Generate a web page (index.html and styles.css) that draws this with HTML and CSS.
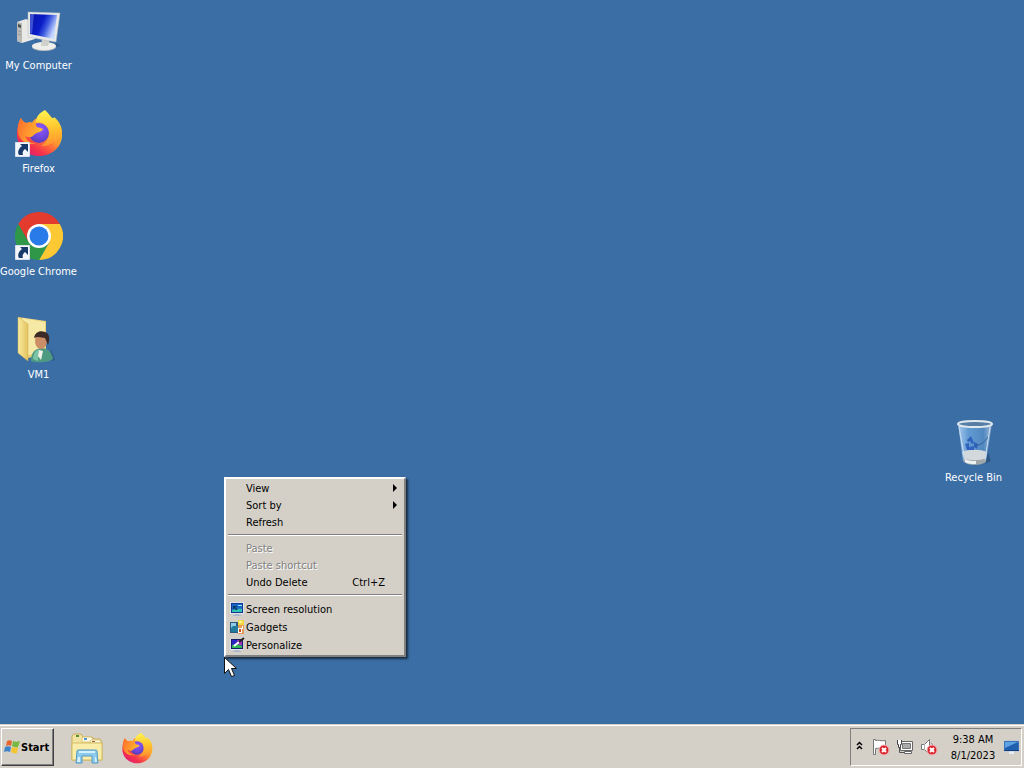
FILE: index.html
```html
<!DOCTYPE html>
<html lang="en">

<head>
  <meta charset="UTF-8" />
  <meta name="viewport" content="width=device-width, initial-scale=1.0" />
  <title>Desktop</title>
  <link rel="stylesheet" href="styles.css">
</head>

<body>
  <!-- Shared icons -->
  <svg class="defs" width="0" height="0" aria-hidden="true">
    <defs>
      <linearGradient id="fx-body" x1="0.85" y1="0.1" x2="0.2" y2="0.9">
        <stop offset="0" stop-color="#fff44f" />
        <stop offset="0.3" stop-color="#ffb92e" />
        <stop offset="0.55" stop-color="#ff7139" />
        <stop offset="0.8" stop-color="#f5334b" />
        <stop offset="1" stop-color="#e3216b" />
      </linearGradient>
      <linearGradient id="fx-flame" x1="0.4" y1="0" x2="0.5" y2="1">
        <stop offset="0" stop-color="#fff44f" />
        <stop offset="0.5" stop-color="#ffc52e" />
        <stop offset="1" stop-color="#ff8a30" />
      </linearGradient>
      <radialGradient id="fx-globe" cx="0.55" cy="0.3" r="0.8">
        <stop offset="0" stop-color="#9059ff" />
        <stop offset="0.6" stop-color="#6b45d6" />
        <stop offset="1" stop-color="#4b3aa8" />
      </radialGradient>
      <linearGradient id="fx-head" x1="0" y1="0" x2="1" y2="0.4">
        <stop offset="0" stop-color="#ff6a2c" />
        <stop offset="1" stop-color="#ffbd2f" />
      </linearGradient>
    </defs>
    <symbol id="firefox" viewBox="0 0 48 48">
      <path fill="url(#fx-body)" d="M6 9c1 3 3 4 5 5 3-1 5-1 8 0 3-7 8-8 19-5 6 5 9 10 9 17 0 12-10 21-23 21C11 47 2 37 2 26c0-7 1-11 4-17z" />
      <path fill="url(#fx-flame)" d="M30 1c-6 3-9 7-9 12 6-1 12 3 13 9 1 7-3 12-8 15 8 0 14-3 15-11 1 5 0 9-2 13 5-4 8-9 8-15 0-7-3-12-8-16l-1 3c-2-4-5-7-8-10z" />
      <circle cx="24" cy="24" r="10" fill="url(#fx-globe)" />
      <path fill="url(#fx-head)" d="M6 9c1 3 3 4 5 5 2 0 4-1 6 0 1-2 2-4 5-5-2 3-2 6 0 9 2 1 5 1 6 2-1 3-5 3-8 5-2 1-2 3-5 3-2 0-4 0-5-1 2 5 6 8 11 7-8 3-17-2-18-11 0-5 0-10 3-14z" />
    </symbol>
    <symbol id="shortcut" viewBox="0 0 15 15">
      <path fill="#f4f6fb" stroke="#d5deec" d="M.5.5h14v14H.5z" />
      <path fill="#173a6b" d="M5 2h8v8l-3-3C8 9 7 10 8 13H4C2 10 4 6 7 4z" />
    </symbol>
  </svg>

  <main class="desktop">
    <div class="icons">
      <a class="icon" href="#">
        <svg viewBox="0 0 48 48" aria-hidden="true">
          <defs>
            <linearGradient id="screen" x1="0" y1="0" x2="1" y2="0.4">
              <stop offset="0" stop-color="#0716a8" />
              <stop offset="0.5" stop-color="#0a1cc8" />
              <stop offset="0.7" stop-color="#3c58de" />
              <stop offset="1" stop-color="#c5d8ff" />
            </linearGradient>
          </defs>
          <path fill="#234a78" opacity="0.5" d="M22 44l24-4-4-3z" />
          <path fill="#e9e9e6" d="M2 16l9-3 9 4v16L7 37l-5-2z" />
          <path fill="#b9bab8" d="M7 17v20l-5-2V16z" />
          <path fill="#4c5355" d="M3 18l3 1v3l-3-1z" />
          <path stroke="#999" d="M3 25l3 1M3 28l3 1" />
          <ellipse cx="29" cy="41" rx="12" ry="4" fill="#bfc3c5" />
          <ellipse cx="29" cy="40" rx="12" ry="4" fill="#eeeeeb" />
          <path fill="#d1d1cc" d="M27 33h8l-2 7h-7z" />
          <path fill="#e7e9e9" stroke="#b7bdc2" stroke-width="0.500" d="M13 6l32 1-4 29-28-5z" />
          <path fill="url(#screen)" d="M15 8l27 1-3 24-24-5z" />
          <path fill="#8ea4ff" opacity="0.4" d="M15 8h4l-2 20-2-1z" />
        </svg>
        <span>My Computer</span>
      </a>
      <a class="icon" href="#">
        <svg viewBox="0 0 48 48" aria-hidden="true">
          <use href="#firefox" width="48" height="48" />
          <use href="#shortcut" x="0" y="33" width="15" height="15" />
        </svg>
        <span>Firefox</span>
      </a>
      <a class="icon" href="#">
        <svg viewBox="0 0 48 48" aria-hidden="true">
          <path fill="#e33b2e" d="M3.200 12a24 24 0 0 1 41.600 0H24L13.600 30z" />
          <path fill="#fcc934" d="M44.800 12A24 24 0 0 1 24 48l10.400-18L34.400 18 24 12z" />
          <path fill="#2e9848" d="M24 48A24 24 0 0 1 3.200 12l10.400 18L24 36l10.400-6z" />
          <circle cx="24" cy="24" r="12" fill="#fff" />
          <circle cx="24" cy="24" r="9.500" fill="#2a7bea" />
          <use href="#shortcut" x="0" y="33" width="15" height="15" />
        </svg>
        <span>Google Chrome</span>
      </a>
      <a class="icon" href="#">
        <svg viewBox="0 0 48 48" aria-hidden="true">
          <defs>
            <linearGradient id="folder" x1="0" y1="0" x2="1" y2="0">
              <stop offset="0" stop-color="#f9eaa0" />
              <stop offset="1" stop-color="#e3c35f" />
            </linearGradient>
          </defs>
          <path fill="#e9cf78" d="M3 2l28 4v33l-18 4z" />
          <path fill="#f6e8a5" d="M7 3l23 4v29l-17 4z" />
          <path fill="url(#folder)" stroke="#d2b24e" stroke-width="0.500" d="M3 2l10 7v37L3 38z" />
          <path fill="#244a70" opacity="0.5" d="M36 46l4-1-4-11z" />
          <path fill="#4f9b82" d="M16 46c0-8 4-13 11-13 6 0 10 5 11 11-5 4-17 4-22 2z" />
          <path fill="#7dc4a6" d="M18 44c0-5 3-9 6-10l-1 12z" />
          <path fill="#f2f2e8" d="M24 35l4 1-2 9-3-4z" />
          <ellipse cx="26" cy="26" rx="6" ry="8" fill="#cb8e66" />
          <path fill="#3b2a25" d="M19 23c1-6 6-8 11-6 5 1 5 8 3 13l-3-7c-3 0-7-2-11 0z" />
        </svg>
        <span>VM1</span>
      </a>
    </div>

    <a class="icon recycle" href="#">
      <svg viewBox="0 0 48 48" aria-hidden="true">
        <defs>
          <linearGradient id="glass" x1="0" y1="0" x2="1" y2="0">
            <stop offset="0" stop-color="#a8caec" />
            <stop offset="0.3" stop-color="#629bd3" />
            <stop offset="0.75" stop-color="#5288c0" />
            <stop offset="1" stop-color="#a2bcd8" />
          </linearGradient>
        </defs>
        <path fill="#203f66" opacity="0.5" d="M35 46l6-3-3-9z" />
        <path fill="url(#glass)" d="M8 5h34l-6 38c-5 5-18 5-23 0z" />
        <path fill="#d2d8dc" d="M12 34c6-3 19-3 25 0l-1 7c-6 3-17 3-22 0z" />
        <path fill="#a0a5a8" d="M13 40c6 3 17 3 23 0v4c-6 4-17 4-22 0z" />
        <path fill="#eef1f2" d="M15 41c4 2 7 2 11 2v3c-5 0-8 0-11-2z" />
        <path fill="#2f63bd" d="M17 22l4-4 3 7-2 1-2-3-2 1zM15 26l4-1v4l5-1v4h-7zM24 24l4 2-1 5-3-2z" />
        <path fill="none" stroke="#315f9c" d="M24 27c7 1 10-3 14-8" />
        <ellipse cx="25" cy="6" rx="17" ry="3" fill="#557da5" stroke="#dfe8ed" stroke-width="2" />
        <path fill="none" stroke="#c4dcf1" d="M9 9l6 33M40 9l-5 33" />
      </svg>
      <span>Recycle Bin</span>
    </a>

    <div class="menu" role="menu">
      <button class="item" role="menuitem">View <i class="arrow"></i></button>
      <button class="item" role="menuitem">Sort by <i class="arrow"></i></button>
      <button class="item" role="menuitem">Refresh</button>
      <hr />
      <button class="item" role="menuitem" disabled>Paste</button>
      <button class="item" role="menuitem" disabled>Paste shortcut</button>
      <button class="item" role="menuitem">Undo Delete <span class="keys">Ctrl+Z</span></button>
      <hr />
      <button class="item with-icon" role="menuitem">
        <svg viewBox="0 0 16 16" aria-hidden="true">
          <path fill="#a9b8cc" d="M6 13h4v1h2v1H4v-1h2z" />
          <path fill="#dde3ec" d="M1 1h14v12H1z" />
          <path fill="#16368f" d="M2 2h12v10H2z" />
          <path fill="#1668c8" d="M3 3h10v8H3z" />
          <path fill="#2ec6b1" d="M3 9c3 0 6-2 10-1v3H3z" />
          <path fill="#073c5d" d="M4 5h4v1H6l3 3H7L5 7v1H4z" />
          <path fill="#9fe0f0" d="M9 4h4v1H9z" />
        </svg>
        Screen resolution
      </button>
      <button class="item with-icon" role="menuitem">
        <svg viewBox="0 0 16 16" aria-hidden="true">
          <path fill="#315a7f" d="M1 3h9v11H1z" />
          <path fill="#8ccbe4" d="M2 4h5v5H2z" />
          <path fill="#237a9a" d="M4 7h5v6H2V9z" />
          <path fill="#f5d63e" d="M9 1h6v5H9z" />
          <path fill="#fff49b" d="M10 2h3v2h-3z" />
          <path fill="#e79a58" d="M9 6h6v9H9z" />
          <path fill="#fff" d="M9 9h4v5H9zM13 7h1v3h-1z" />
          <path fill="#c55422" d="M10 10h2v3h-2z" />
        </svg>
        Gadgets
      </button>
      <button class="item with-icon" role="menuitem">
        <svg viewBox="0 0 16 16" aria-hidden="true">
          <path fill="#a9b8cc" d="M6 13h4v1h2v1H4v-1h2z" />
          <path fill="#dde3ec" d="M1 2h13v11H1z" />
          <path fill="#181b6a" d="M2 2h12v10H2z" />
          <path fill="#2b25c6" d="M3 3h10v8H3z" />
          <path fill="#30b755" d="M3 8c4-1 7-1 10 1v2H3z" />
          <path fill="#9c35bd" d="M8 3h5v5H9z" />
          <path fill="none" stroke="#fff" stroke-width="2" d="M5 9l5-4" />
          <path fill="none" stroke="#222" stroke-width="2" d="M10 5l5-4" />
        </svg>
        Personalize
      </button>
    </div>

    <svg class="cursor" viewBox="0 0 13 21" aria-hidden="true">
      <path fill="#fff" stroke="#111" d="M.5.5v16l4-4 3 7 3-1-3-7h5z" />
    </svg>
  </main>

  <footer class="taskbar">
    <button class="start">
      <svg viewBox="0 0 16 16" aria-hidden="true">
        <path fill="#e7642e" d="M3 2c2-1 3-1 5 0L7 7C5 6 4 6 2 7z" />
        <path fill="#78b943" d="M9 2c2 1 4 1 7 0l-2 6c-2 1-4 0-6-1z" />
        <path fill="#3c83c8" d="M1 8c2-1 4-1 6 0l-1 5c-2-1-4-1-6 0z" />
        <path fill="#f4c52f" d="M8 8c2 1 4 1 6 0l-1 6c-2 1-4 0-6-1z" />
      </svg>
      Start
    </button>
    <nav class="quick">
      <a href="#" aria-label="Windows Explorer">
        <svg viewBox="0 0 32 32" aria-hidden="true">
          <path fill="#f3e3a0" stroke="#c9ae5c" d="M1 28V4l2-2h7l2 3h9l2 2h6l2 3v18z" />
          <path fill="#fffbe6" stroke="#d9c57a" d="M11 10V6l1-1h8l2 2v3z" />
          <path fill="#fffbe6" stroke="#d9c57a" d="M19 11V9l1-1h9l1 2v1z" />
          <path fill="#4f8f3e" d="M5 3h3v2H5z" />
          <path fill="#4d95ce" d="M13 6h3v2h-3z" />
          <path fill="#a85b39" d="M21 9h3v1h-3z" />
          <path fill="#f8eda9" stroke="#d5bd65" d="M1 11h30v17H1z" />
          <path fill="#8acbed" stroke="#5799c6" d="M5 31l1-12c0-1 1-1 2-1h16c1 0 2 0 2 1l1 12h-6v-7H11v7z" />
          <path fill="#d7f1fb" d="M8 19h16v2H8zM7 25h2v5H6zM24 25h1l1 5h-2z" />
        </svg>
      </a>
      <a href="#" aria-label="Firefox">
        <svg viewBox="0 0 48 48" aria-hidden="true"><use href="#firefox" width="48" height="48" /></svg>
      </a>
    </nav>
    <div class="tray">
      <button class="expand" aria-label="Show hidden icons">
        <svg viewBox="0 0 7 9" aria-hidden="true">
          <path fill="none" stroke="#000" stroke-width="1.500" d="M1 4l2.500-2.500L6 4M1 8l2.500-2.500L6 8" />
        </svg>
      </button>
      <svg class="status" viewBox="0 0 18 18" aria-hidden="true">
        <path fill="#fff" stroke="#777" d="M1.500 1.500v15h2v-6c3-1 5 1 10 0v-8c-5 1-7-1-10 0v-1z" />
        <circle cx="12" cy="12" r="5" fill="#d9252d" stroke="#f5b8b8" />
        <path stroke="#fff" stroke-width="2" d="M10 10l4 4M14 10l-4 4" />
      </svg>
      <svg class="status" viewBox="0 0 18 18" aria-hidden="true">
        <path fill="#fff" stroke="#666" d="M4.500 3.500h12v9h-12z" />
        <path fill="#aaa" stroke="#777" d="M6.500 5.500h8v5h-8z" />
        <path fill="#fff" stroke="#666" d="M8.500 13.500h7v2h-7z" />
        <path fill="none" stroke="#555" d="M3.500 9v5.500h5" />
        <path fill="#fff" stroke="#444" d="M1.500 2v4.500h1v3h2v-3h1V2" />
      </svg>
      <svg class="status" viewBox="0 0 18 18" aria-hidden="true">
        <path fill="#fff" stroke="#777" d="M1.500 6.500h3l5-5v15l-5-5h-3z" />
        <path stroke="#aaa" d="M4.500 6v6" />
        <path fill="none" stroke="#999" d="M11 5c2 1 2 3 2 4" />
        <circle cx="12" cy="12" r="5" fill="#d9252d" stroke="#f5b8b8" />
        <path stroke="#fff" stroke-width="2" d="M10 10l4 4M14 10l-4 4" />
      </svg>
      <time class="clock" datetime="2023-08-01T09:38">9:38 AM<br />8/1/2023</time>
      <button class="show-desktop" aria-label="Show desktop">
        <svg viewBox="0 0 15 14" aria-hidden="true">
          <path fill="#e8edf4" d="M5 11h5v3H5z" />
          <path fill="#1f5fae" stroke="#8fb3da" stroke-width="0.500" d="M0 1h15v10H0z" />
          <path fill="#5da2e2" d="M1 2h13L1 8z" />
          <path fill="#123d80" d="M0 10h15v1H0z" />
        </svg>
      </button>
    </div>
  </footer>
</body>

</html>
```
FILE: styles.css
```css
body {
  font-family: Tahoma, "DejaVu Sans Condensed", "DejaVu Sans", sans-serif;
  font-size: 11px;
  display: flex;
  flex-direction: column;
  height: 100vh;
  margin: 0;
  overflow: hidden;
  background: #3b6ea5;
  color: #000;
}

button {
  font: inherit;
  color: inherit;
  background: none;
  border: none;
  margin: 0;
  padding: 0;
}

svg {
  display: block;
  flex: none;
}

.defs {
  position: absolute;
}

.desktop {
  flex: 1;
  position: relative;
  min-height: 0;
}

.icons {
  display: flex;
  flex-direction: column;
  align-items: flex-start;
  gap: 36px;
  padding-top: 6px;
}

.icon {
  display: flex;
  flex-direction: column;
  align-items: center;
  gap: 5px;
  width: 77px;
  color: #fff;
  line-height: 14px;
  text-decoration: none;
  white-space: nowrap;
}

.icon svg {
  width: 48px;
  height: 48px;
}

.recycle {
  position: absolute;
  left: 935px;
  top: 418px;
}

/* Context menu */
.menu {
  position: absolute;
  left: 224px;
  top: 477px;
  box-sizing: border-box;
  width: 182px;
  padding: 1px;
  background: #d4d0c8;
  border: 2px solid;
  border-color: #fff #808080 #808080 #fff;
  box-shadow: 2px 2px 2px rgba(0, 0, 0, 0.6);
}

.item {
  display: flex;
  align-items: center;
  width: 100%;
  height: 17px;
  padding: 0 6px 0 19px;
  text-align: left;
  white-space: nowrap;
}

.item:disabled {
  color: #808080;
  text-shadow: 1px 1px #fff;
}

.with-icon {
  height: 18px;
  gap: 1px;
  padding-left: 2px;
}

.with-icon svg {
  width: 16px;
  height: 16px;
}

.arrow {
  margin-left: auto;
  margin-bottom: 2px;
  border: 4px solid transparent;
  border-left: 4px solid #000;
  border-right: none;
}

.keys {
  margin-left: auto;
  padding-right: 12px;
}

.menu hr {
  margin: 3px 1px 4px;
  border: none;
  border-top: 1px solid #808080;
  border-bottom: 1px solid #fff;
}

.cursor {
  position: absolute;
  left: 224px;
  top: 657px;
  width: 13px;
  height: 21px;
}

/* Taskbar */
.taskbar {
  display: flex;
  box-sizing: border-box;
  height: 44px;
  padding: 2px 2px 2px 1px;
  background: #d4d0c8;
  border-top: 1px solid #d4d0c8;
  box-shadow: inset 0 1px #fff;
}

.start {
  display: flex;
  align-items: center;
  gap: 1px;
  width: 53px;
  margin-top: 1px;
  padding-left: 2px;
  border: 1px solid;
  border-color: #fff #404040 #404040 #fff;
  box-shadow: inset -1px -1px #808080;
  font-weight: bold;
}

.start svg {
  width: 16px;
  height: 16px;
}

.quick {
  display: flex;
  align-items: center;
  gap: 18px;
  margin-left: 17px;
  padding-top: 2px;
}

.quick svg {
  width: 32px;
  height: 32px;
}

.tray {
  display: flex;
  align-items: center;
  gap: 6px;
  box-sizing: border-box;
  width: 172px;
  margin: 1px 0 0 auto;
  padding: 0 2px 0 5px;
  border: 1px solid;
  border-color: #808080 #fff #fff #808080;
}

.expand svg {
  width: 7px;
  height: 9px;
}

.expand {
  padding: 0 3px 4px 0;
}

.status {
  width: 18px;
  height: 18px;
}

.clock {
  flex: 1;
  padding: 2px 0 0 4px;
  line-height: 16px;
  text-align: center;
  white-space: nowrap;
}

.show-desktop svg {
  width: 15px;
  height: 14px;
}
```
